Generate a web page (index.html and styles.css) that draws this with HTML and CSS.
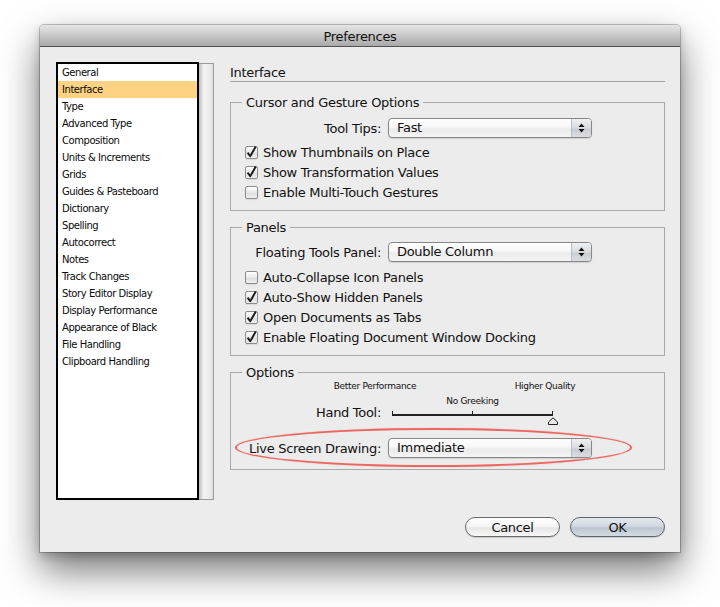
FILE: index.html
```html
<!DOCTYPE html>
<html lang="en">
<head>
    <meta charset="UTF-8">
    <meta name="viewport" content="width=device-width, initial-scale=1.0">
    <title>Preferences</title>
    <link rel="stylesheet" href="styles.css">
</head>
<body>

    <div class="window">
        <div class="titlebar">Preferences</div>

        <div class="content">
            <!-- Category list -->
            <div class="sidebar">
                <ul class="category-list">
                    <li>General</li>
                    <li class="selected">Interface</li>
                    <li>Type</li>
                    <li>Advanced Type</li>
                    <li>Composition</li>
                    <li>Units &amp; Increments</li>
                    <li>Grids</li>
                    <li>Guides &amp; Pasteboard</li>
                    <li>Dictionary</li>
                    <li>Spelling</li>
                    <li>Autocorrect</li>
                    <li>Notes</li>
                    <li>Track Changes</li>
                    <li>Story Editor Display</li>
                    <li>Display Performance</li>
                    <li>Appearance of Black</li>
                    <li>File Handling</li>
                    <li>Clipboard Handling</li>
                </ul>
                <div class="scroll-track"></div>
            </div>

            <!-- Interface panel -->
            <div class="panel">
                <h2 class="panel-title">Interface</h2>

                <fieldset class="group cursor-group">
                    <legend>Cursor and Gesture Options</legend>
                    <div class="form-row">
                        <label>Tool Tips:</label>
                        <div class="popup">
                            <span class="popup-value">Fast</span>
                            <span class="popup-arrows"><svg width="7" height="10" viewBox="0 0 7 10"><path d="M3.5 0.5 L6.5 4 L0.5 4 Z M3.5 9.5 L6.5 6 L0.5 6 Z" fill="#111"/></svg></span>
                        </div>
                    </div>
                    <div class="check-row"><span class="checkbox"><svg width="13" height="13" viewBox="0 0 13 13"><path d="M2.6 6.6 L5.2 10.2 L10.8 0.6" fill="none" stroke="#1b1b1b" stroke-width="1.9" stroke-linejoin="round"/></svg></span>Show Thumbnails on Place</div>
                    <div class="check-row"><span class="checkbox"><svg width="13" height="13" viewBox="0 0 13 13"><path d="M2.6 6.6 L5.2 10.2 L10.8 0.6" fill="none" stroke="#1b1b1b" stroke-width="1.9" stroke-linejoin="round"/></svg></span>Show Transformation Values</div>
                    <div class="check-row"><span class="checkbox"></span>Enable Multi-Touch Gestures</div>
                </fieldset>

                <fieldset class="group panels-group">
                    <legend>Panels</legend>
                    <div class="form-row">
                        <label>Floating Tools Panel:</label>
                        <div class="popup">
                            <span class="popup-value">Double Column</span>
                            <span class="popup-arrows"><svg width="7" height="10" viewBox="0 0 7 10"><path d="M3.5 0.5 L6.5 4 L0.5 4 Z M3.5 9.5 L6.5 6 L0.5 6 Z" fill="#111"/></svg></span>
                        </div>
                    </div>
                    <div class="check-row"><span class="checkbox"></span>Auto-Collapse Icon Panels</div>
                    <div class="check-row"><span class="checkbox"><svg width="13" height="13" viewBox="0 0 13 13"><path d="M2.6 6.6 L5.2 10.2 L10.8 0.6" fill="none" stroke="#1b1b1b" stroke-width="1.9" stroke-linejoin="round"/></svg></span>Auto-Show Hidden Panels</div>
                    <div class="check-row"><span class="checkbox"><svg width="13" height="13" viewBox="0 0 13 13"><path d="M2.6 6.6 L5.2 10.2 L10.8 0.6" fill="none" stroke="#1b1b1b" stroke-width="1.9" stroke-linejoin="round"/></svg></span>Open Documents as Tabs</div>
                    <div class="check-row"><span class="checkbox"><svg width="13" height="13" viewBox="0 0 13 13"><path d="M2.6 6.6 L5.2 10.2 L10.8 0.6" fill="none" stroke="#1b1b1b" stroke-width="1.9" stroke-linejoin="round"/></svg></span>Enable Floating Document Window Docking</div>
                </fieldset>

                <fieldset class="group options-group">
                    <legend>Options</legend>
                    <div class="scale-labels">
                        <span>Better Performance</span>
                        <span>Higher Quality</span>
                    </div>
                    <div class="form-row hand-row">
                        <label>Hand Tool:</label>
                        <div class="slider">
                            <div class="slider-mid">No Greeking</div>
                            <div class="slider-track"></div>
                            <svg class="slider-thumb" width="10" height="8" viewBox="0 0 10 8"><path d="M0.5 7.5 L0.5 5 L5 0.8 L9.5 5 L9.5 7.5 Z" fill="#e8e8e8" stroke="#222" stroke-width="1"/></svg>
                        </div>
                    </div>
                    <div class="form-row live-row">
                        <label>Live Screen Drawing:</label>
                        <div class="popup">
                            <span class="popup-value">Immediate</span>
                            <span class="popup-arrows"><svg width="7" height="10" viewBox="0 0 7 10"><path d="M3.5 0.5 L6.5 4 L0.5 4 Z M3.5 9.5 L6.5 6 L0.5 6 Z" fill="#111"/></svg></span>
                        </div>
                        <!-- red highlight drawn over the row -->
                        <div class="highlight"></div>
                    </div>
                </fieldset>
            </div>
        </div>

        <div class="footer">
            <button class="btn">Cancel</button>
            <button class="btn btn-default">OK</button>
        </div>
    </div>

</body>
</html>
```

FILE: styles.css
```css
html, body {
    height: 100%;
}
body {
    margin: 0;
    background-color: #fff;
    font-family: "DejaVu Sans", sans-serif;
    font-size: 13px;
    letter-spacing: -0.3px;
    color: #111;
}
.window {
    width: 640px;
    height: 527px;
    margin: 25px 0 0 40px;
    background-color: #ececec;
    border-radius: 4px 4px 0 0;
    box-shadow: 0 18px 38px rgba(0,0,0,0.55), 0 4px 10px rgba(0,0,0,0.2), 0 0 0 1px rgba(0,0,0,0.22);
    display: flex;
    flex-direction: column;
}
.titlebar {
    height: 21px;
    line-height: 23px;
    text-align: center;
    background: linear-gradient(#e6e6e6, #a9a9a9);
    border-bottom: 1px solid #525252;
    border-radius: 4px 4px 0 0;
}
.content {
    display: flex;
    padding: 15px 0 0 16px;
}

/* sidebar */
.sidebar {
    display: flex;
    height: 438px;
}
.category-list {
    width: 139px;
    margin: 0;
    padding: 0;
    list-style: none;
    background-color: #fff;
    border: 2px solid #000;
    font-size: 10px;
    letter-spacing: -0.45px;
    color: #0a0a0a;
}
.category-list li {
    height: 17px;
    line-height: 17px;
    padding-left: 4px;
    white-space: nowrap;
}
.category-list .selected {
    background-color: #fdd383;
}
.scroll-track {
    width: 14px;
    margin-top: 1px;
    background: linear-gradient(to right, #bcbcbc, #f4f4f4 35%, #eaeaea 80%, #dcdcdc);
    border: 1px solid #9a9a9a;
    border-left: none;
}

/* panel */
.panel {
    width: 435px;
    margin-left: 16px;
}
.panel-title {
    margin: 0;
    padding-top: 2px;
    font-size: 13px;
    font-weight: normal;
    line-height: 17px;
    border-bottom: 1px solid #a4a4a4;
}
.group {
    margin: 8px 0 0;
    padding: 6px 0 8px;
    border: 1px solid #a9a9a9;
    min-width: 0;
}
.group legend {
    margin-left: 11px;
    padding: 0 4px;
    line-height: 17px;
}
.cursor-group {
    margin-top: 12px;
    padding-top: 7px;
}
.options-group {
    padding: 0 0 11px;
}

.form-row {
    display: flex;
    align-items: center;
    gap: 7px;
}
.form-row label {
    width: 150px;
    text-align: right;
    white-space: nowrap;
}
.popup {
    width: 204px;
    height: 20px;
    box-sizing: border-box;
    display: flex;
    border: 1px solid #878787;
    border-radius: 4px;
    background: linear-gradient(#ffffff, #f7f7f7 45%, #ebebeb 55%, #f5f5f5);
    box-shadow: 0 1px 1px rgba(0,0,0,0.12);
}
.popup-value {
    flex: 1;
    line-height: 18px;
    padding-left: 8px;
}
.popup-arrows {
    width: 19px;
    display: flex;
    align-items: center;
    justify-content: center;
    border-left: 1px solid #bdbdbd;
    border-radius: 0 3px 3px 0;
    background: linear-gradient(#eef0f2, #d9dce0 50%, #c9cdd2 55%, #dadde1);
}

.check-row {
    display: flex;
    align-items: center;
    gap: 5px;
    height: 20px;
    padding-left: 14px;
    white-space: nowrap;
}
.cursor-group .form-row {
    margin-bottom: 4px;
}
.panels-group .form-row {
    margin-bottom: 5px;
}
.checkbox {
    width: 13px;
    height: 13px;
    box-sizing: border-box;
    border: 1px solid #8b8b8b;
    border-radius: 2px;
    background: linear-gradient(#ffffff, #e9e9e9 50%, #dcdcdc 55%, #f1f1f1);
    box-shadow: 0 1px 1px rgba(0,0,0,0.08);
}
.checkbox svg {
    display: block;
    margin: -1px;
    overflow: visible;
}

/* hand tool slider */
.scale-labels {
    display: flex;
    gap: 50px;
    padding-left: 84px;
    font-size: 9px;
    line-height: 11px;
}
.scale-labels span {
    width: 120px;
    text-align: center;
    white-space: nowrap;
}
.hand-row {
    align-items: flex-start;
    margin-top: 4px;
}
.hand-row label {
    margin-top: 8px;
    line-height: 17px;
}
.slider {
    width: 161px;
    margin-left: 4px;
    display: flex;
    flex-direction: column;
}
.slider-mid {
    font-size: 9px;
    line-height: 11px;
    text-align: center;
}
.slider-track {
    height: 3px;
    margin-top: 4px;
    border: 1px solid #222;
    border-top: none;
    border-bottom-width: 2px;
    background: linear-gradient(#222, #222) center / 1px 100% no-repeat;
}
.slider-thumb {
    align-self: flex-end;
    margin: 1px -5px 0 0;
}

.live-row {
    position: relative;
    margin-top: 13px;
}
.highlight {
    position: absolute;
    left: 4px;
    top: -10px;
    width: 393px;
    height: 35px;
    border: 2px solid rgba(236, 88, 80, 0.9);
    border-radius: 50%;
    box-shadow: 0 0 1px rgba(236, 88, 80, 0.7);
    pointer-events: none;
}

/* buttons */
.footer {
    display: flex;
    justify-content: flex-end;
    gap: 10px;
    padding: 17px 15px 0;
}
.btn {
    width: 95px;
    height: 20px;
    padding: 0;
    font-family: "DejaVu Sans", sans-serif;
    font-size: 13px;
    letter-spacing: -0.3px;
    color: #111;
    border: 1px solid #6a6a6a;
    border-radius: 10px;
    background: linear-gradient(#ffffff, #f6f6f6 45%, #e6e6e6 55%, #f8f8f8);
    box-shadow: 0 1px 1px rgba(0,0,0,0.15);
}
.btn-default {
    border-color: #5c6570;
    background: linear-gradient(#e3e8ee, #d2d9e1 45%, #bdc6d0 55%, #d3dae2);
}
```
